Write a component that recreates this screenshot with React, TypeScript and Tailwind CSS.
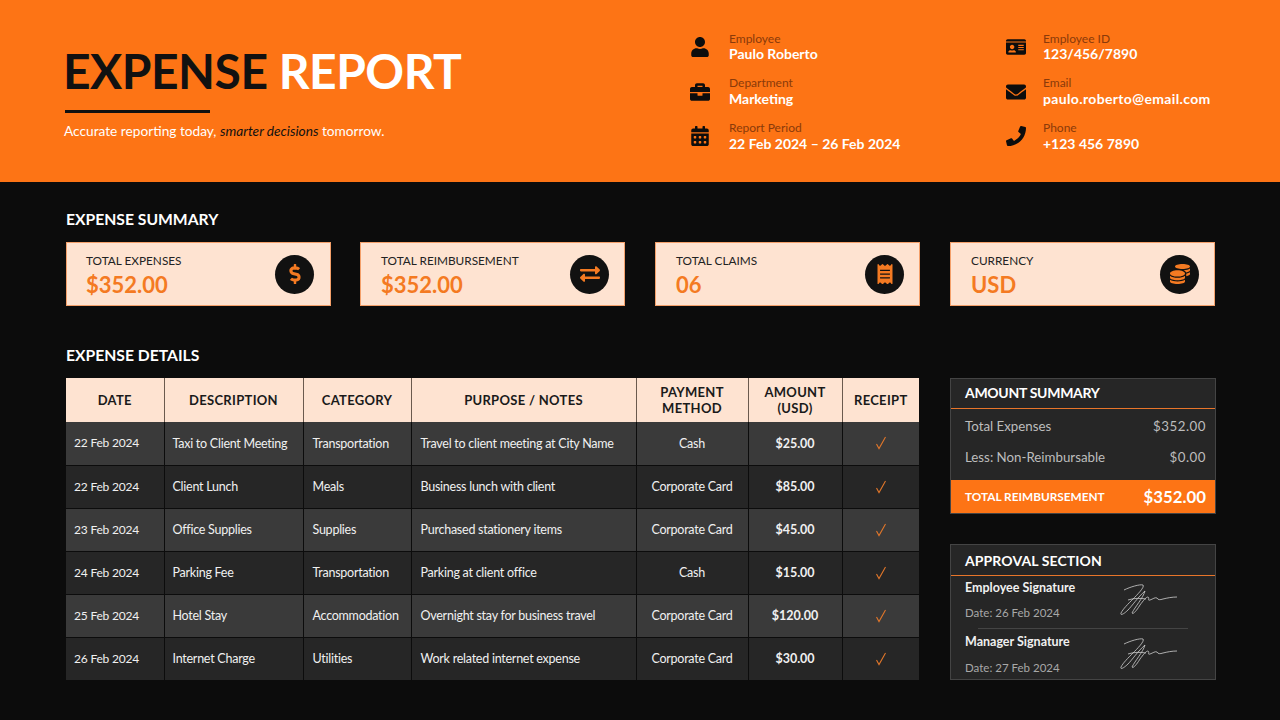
import type { ReactNode } from 'react';
import { FaUser, FaBriefcase, FaCalendarAlt, FaIdCard, FaEnvelope, FaPhone, FaDollarSign, FaExchangeAlt, FaReceipt, FaCoins } from 'react-icons/fa';

const font = "font-['Lato','Liberation_Sans',sans-serif]";

const leftInfo = [
  { icon: <FaUser size={20} />, label: 'Employee', value: 'Paulo Roberto' },
  { icon: <FaBriefcase size={20} />, label: 'Department', value: 'Marketing' },
  { icon: <FaCalendarAlt size={20} />, label: 'Report Period', value: '22 Feb 2024 – 26 Feb 2024' },
];

const rightInfo = [
  { icon: <FaIdCard size={20} />, label: 'Employee ID', value: '123/456/7890' },
  { icon: <FaEnvelope size={20} />, label: 'Email', value: 'paulo.roberto@email.com', wide: true },
  { icon: <FaPhone size={20} className="scale-x-[-1] rotate-[-90deg]" />, label: 'Phone', value: '+123 456 7890' },
];

const cards = [
  { label: 'TOTAL EXPENSES', value: '$352.00', icon: <FaDollarSign size={20} /> },
  { label: 'TOTAL REIMBURSEMENT', value: '$352.00', icon: <FaExchangeAlt size={20} /> },
  { label: 'TOTAL CLAIMS', value: '06', icon: <FaReceipt size={20} /> },
  { label: 'CURRENCY', value: 'USD', icon: <FaCoins size={20} /> },
];

const rows = [
  ['22 Feb 2024', 'Taxi to Client Meeting', 'Transportation', 'Travel to client meeting at City Name', 'Cash', '$25.00'],
  ['22 Feb 2024', 'Client Lunch', 'Meals', 'Business lunch with client', 'Corporate Card', '$85.00'],
  ['23 Feb 2024', 'Office Supplies', 'Supplies', 'Purchased stationery items', 'Corporate Card', '$45.00'],
  ['24 Feb 2024', 'Parking Fee', 'Transportation', 'Parking at client office', 'Cash', '$15.00'],
  ['25 Feb 2024', 'Hotel Stay', 'Accommodation', 'Overnight stay for business travel', 'Corporate Card', '$120.00'],
  ['26 Feb 2024', 'Internet Charge', 'Utilities', 'Work related internet expense', 'Corporate Card', '$30.00'],
];

type InfoProps = { icon: ReactNode; label: string; value: string; wide?: boolean; indent: string };

function InfoRow({ icon, label, value, wide, indent }: InfoProps) {
  return (
    <div className="flex h-[33px] items-center">
      <div className="flex w-[22px] justify-center text-[#0d0d0d]">{icon}</div>
      <div className={indent}>
        <div className="text-[12px] leading-[14.6px] text-[#8a3a0a]">{label}</div>
        <div className={`text-[14px] font-bold leading-[16px] text-white ${wide ? 'tracking-[0.35px]' : ''}`}>{value}</div>
      </div>
    </div>
  );
}

function Signature() {
  return (
    <svg width="58" height="31" viewBox="0 0 58 31" fill="none" stroke="#cfcfcf" strokeWidth="0.8">
      <path d="M4 6 C10 3 20 0 23 1 C25 3 17 11 13 15 C8 20 3 25 1 29 C0 32 4 30 8 26 C12 22 18 13 25 7 C23 14 15 23 12 29 C13 31 17 26 20 21 C23 17 26 13 28 13 C30 14 27 17 30 16 C33 15 35 13 37 14 C38 16 40 16 43 15 C47 14 52 13 57 13" />
      <path d="M8 16 C14 14 20 14 26 15" />
    </svg>
  );
}

function PanelTitle({ children, className }: { children: ReactNode; className: string }) {
  return (
    <>
      <div className={`px-[14px] text-[14px] font-bold text-white ${className}`}>{children}</div>
      <div className="h-px bg-[#e8752a]" />
    </>
  );
}

export default function App() {
  return (
    <div className={`h-[720px] w-[1280px] overflow-hidden bg-[#0c0c0c] ${font}`}>
      <header className="flex h-[182px] bg-[#fd7415]">
        <div className="ml-[63px] w-[626px] pt-[42px]">
          <h1 className="text-[48px] font-bold leading-[58px] tracking-[-0.5px] text-white">
            <span className="text-[#111111]">EXPENSE</span> REPORT
          </h1>
          <div className="ml-[2px] mt-[10px] h-[3px] w-[145px] bg-[#111111]" />
          <p className="ml-[1px] mt-[9px] text-[13.7px] leading-[18px] text-white">
            Accurate reporting today, <em className="text-[#111111]">smarter decisions</em> tomorrow.
          </p>
        </div>
        <div className="flex w-[316px] flex-col gap-[11.6px] pt-[30.6px]">
          {leftInfo.map((item) => (
            <InfoRow key={item.label} {...item} indent="ml-[18px]" />
          ))}
        </div>
        <div className="flex flex-col gap-[11.6px] pt-[30.6px]">
          {rightInfo.map((item) => (
            <InfoRow key={item.label} {...item} indent="ml-[16px]" />
          ))}
        </div>
      </header>

      <main className="pl-[66px] pr-[64px]">
        <h2 className="mt-[27px] text-[15.7px] font-bold leading-[20px] text-white">EXPENSE SUMMARY</h2>
        <div className="mt-[13px] flex gap-[30px]">
          {cards.map((card) => (
            <div
              key={card.label}
              className="flex h-[64px] w-[265px] items-center justify-between border border-[#f4a06a] bg-[#fee3d1] pl-[20px] pr-[15px] first:mr-[-1px] first:pl-[19px] first:pr-[16px]"
            >
              <div className="pt-[2px]">
                <div className="text-[11.8px] leading-[16px] text-[#222222]">{card.label}</div>
                <div className="mt-[3px] text-[22px] font-bold leading-[26px] text-[#f47a22]">{card.value}</div>
              </div>
              <div className="flex h-[39px] w-[39px] items-center justify-center rounded-full bg-[#111111] text-[#f47a22]">
                {card.icon}
              </div>
            </div>
          ))}
        </div>

        <h2 className="mt-[39px] text-[15.7px] font-bold leading-[20px] text-white">EXPENSE DETAILS</h2>
        <div className="mt-[13px] flex gap-[31px]">
          <table className="h-[302px] w-[853px] shrink-0 table-fixed border-collapse text-[12.5px] tracking-[-0.25px] text-[#f0f0f0]">
            <colgroup>
              <col className="w-[98px]" />
              <col className="w-[139px]" />
              <col className="w-[108px]" />
              <col className="w-[225px]" />
              <col className="w-[112px]" />
              <col className="w-[94px]" />
              <col className="w-[77px]" />
            </colgroup>
            <thead>
              <tr className="h-[44px] bg-[#fee3d1] text-[13px] font-bold leading-[16px] tracking-[0.3px] text-[#1a1a1a]">
                <th className="border-r border-[#6b5a4e]">DATE</th>
                <th className="border-r border-[#6b5a4e]">DESCRIPTION</th>
                <th className="border-r border-[#6b5a4e]">CATEGORY</th>
                <th className="border-r border-[#6b5a4e]">PURPOSE / NOTES</th>
                <th className="border-r border-[#6b5a4e]">
                  PAYMENT
                  <br />
                  METHOD
                </th>
                <th className="border-r border-[#6b5a4e]">
                  AMOUNT
                  <br />
                  (USD)
                </th>
                <th>RECEIPT</th>
              </tr>
            </thead>
            <tbody>
              {rows.map((row, i) => (
                <tr key={row[0] + row[1]} className={`h-[43px] border-b border-[#0c0c0c] ${i % 2 === 0 ? 'bg-[#3a3a3a]' : 'bg-[#262626]'}`}>
                  <td className="border-r border-[#0c0c0c] pl-[8px] text-[12px] tracking-[-0.2px]">{row[0]}</td>
                  <td className="border-r border-[#0c0c0c] pl-[8px] pt-[2px]">{row[1]}</td>
                  <td className="border-r border-[#0c0c0c] pl-[9px] pt-[2px]">{row[2]}</td>
                  <td className="border-r border-[#0c0c0c] pl-[9px] pt-[2px]">{row[3]}</td>
                  <td className="border-r border-[#0c0c0c] pt-[2px] text-center">{row[4]}</td>
                  <td className="border-r border-[#0c0c0c] pt-[2px] text-center font-bold tracking-normal">{row[5]}</td>
                  <td>
                    <svg className="mx-auto" width="12" height="14" viewBox="0 0 12 14" fill="none" stroke="#e0762a" strokeWidth="1.1">
                      <path d="M1.5 8 L4 12.5 L10.5 1" />
                    </svg>
                  </td>
                </tr>
              ))}
            </tbody>
          </table>

          <aside className="flex w-[266px] shrink-0 flex-col gap-[30px]">
            <section className="h-[136px] border border-[#444444] bg-[#262626]">
              <PanelTitle className="h-[29px] leading-[28px] tracking-[-0.3px]">AMOUNT SUMMARY</PanelTitle>
              <div className="flex h-[35px] items-center justify-between pl-[14px] pr-[9px] text-[13.3px] text-[#bdbdbd]">
                <span>Total Expenses</span>
                <span className="tracking-[0.5px]">$352.00</span>
              </div>
              <div className="mb-[9px] flex h-[27px] items-center justify-between pl-[14px] pr-[9px] text-[13.3px] text-[#bdbdbd]">
                <span>Less: Non-Reimbursable</span>
                <span className="tracking-[0.5px]">$0.00</span>
              </div>
              <div className="flex h-[33px] items-center justify-between bg-[#fd7415] pl-[14px] pr-[9px] font-bold text-white">
                <span className="text-[11.8px]">TOTAL REIMBURSEMENT</span>
                <span className="text-[16.8px]">$352.00</span>
              </div>
            </section>

            <section className="h-[136px] border border-[#444444] bg-[#262626]">
              <PanelTitle className="h-[30px] leading-[32px] tracking-[0.1px]">APPROVAL SECTION</PanelTitle>
              <div className="flex h-[52px] items-start pl-[14px] pt-[4px]">
                <div className="w-[155px]">
                  <div className="text-[12.5px] font-bold leading-[16px] text-[#f0f0f0]">Employee Signature</div>
                  <div className="mt-[9px] text-[11.5px] leading-[16px] text-[#a8a8a8]">Date: 26 Feb 2024</div>
                </div>
                <div className="mt-[4px]">
                  <Signature />
                </div>
              </div>
              <div className="mx-[27px] h-px bg-[#444444]" />
              <div className="flex items-start pl-[14px] pt-[5px]">
                <div className="w-[155px]">
                  <div className="text-[12.5px] font-bold leading-[16px] text-[#f0f0f0]">Manager Signature</div>
                  <div className="mt-[10px] text-[11.5px] leading-[16px] text-[#a8a8a8]">Date: 27 Feb 2024</div>
                </div>
                <div className="mt-[4px]">
                  <Signature />
                </div>
              </div>
            </section>
          </aside>
        </div>
      </main>
    </div>
  );
}
